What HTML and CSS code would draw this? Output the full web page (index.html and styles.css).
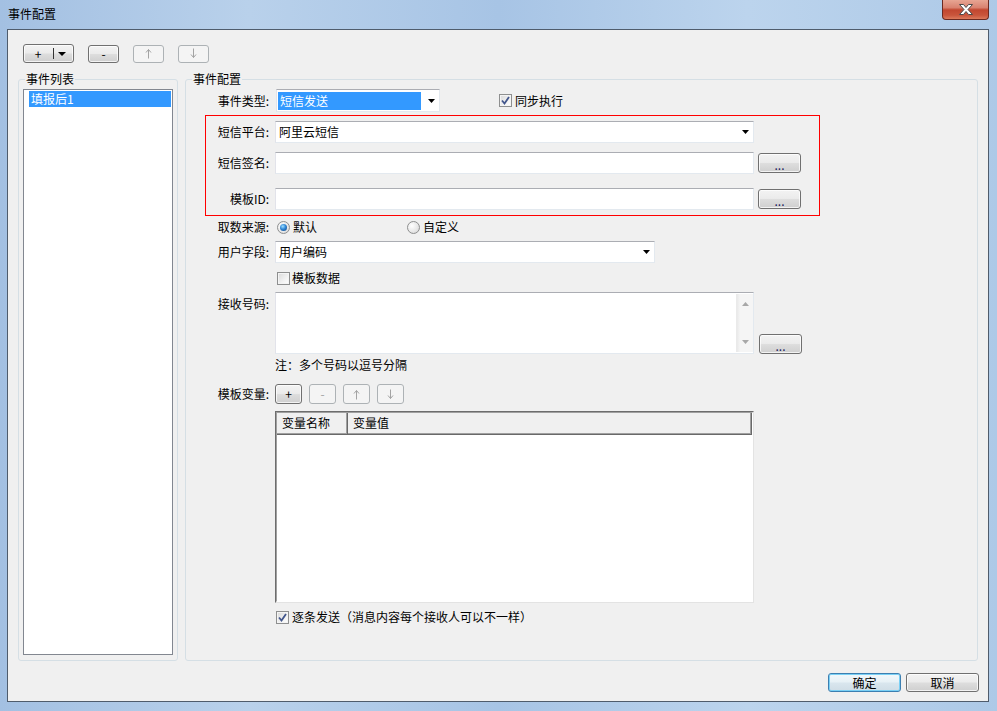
FILE: index.html
```html
<!DOCTYPE html>
<html lang="zh-CN">
<head>
<meta charset="utf-8">
<title>事件配置</title>
<link rel="stylesheet" href="styles.css">
</head>
<body>
<div class="window">
  <div class="titlebar">
    <span class="title">事件配置</span>
    <button class="close" aria-label="关闭">
      <svg width="14" height="11" viewBox="0 0 14 11"><polygon points="0.5,0.5 4.5,0.5 7,3.5 9.5,0.5 13.5,0.5 9,5.5 13.5,10.5 9.5,10.5 7,7.5 4.5,10.5 0.5,10.5 5,5.5" fill="#fff" stroke="#4a4a4a" stroke-width="1"/></svg>
    </button>
  </div>
  <div class="client">
    <div class="toolbar">
      <button class="btn btn-split"><span class="plus">+</span><span class="split-sep"></span><svg width="8" height="4" viewBox="0 0 8 4"><polygon points="0,0 8,0 4,4" fill="#000"/></svg></button>
      <button class="btn btn-tool">-</button>
      <button class="btn btn-tool disabled"><svg width="7" height="11" viewBox="0 0 7 11"><path d="M3.5 1.5V10.5M1 4.5L3.5 1.5L6 4.5" fill="none" stroke="#a3a3a3" stroke-width="1"/></svg></button>
      <button class="btn btn-tool disabled"><svg width="7" height="11" viewBox="0 0 7 11"><path d="M3.5 0.5V9.5M1 6.5L3.5 9.5L6 6.5" fill="none" stroke="#a3a3a3" stroke-width="1"/></svg></button>
    </div>
    <div class="groups">
      <fieldset class="group group-list">
        <legend>事件列表</legend>
        <div class="listbox">
          <div class="list-item selected">填报后1</div>
        </div>
      </fieldset>
      <fieldset class="group group-config">
        <legend>事件配置</legend>
        <div class="cfg">
          <div class="row r-type">
            <span class="lbl">事件类型:</span>
            <div class="combo w-type"><span class="sel">短信发送</span><svg class="drop" width="7" height="4" viewBox="0 0 7 4"><polygon points="0,0 7,0 3.5,4" fill="#000"/></svg></div>
            <label class="check chk-sync"><span class="cbox checked"><svg width="9" height="9" viewBox="0 0 9 9"><path d="M1 4.5L3.5 7.5L8 1" fill="none" stroke="#42568c" stroke-width="1.8"/></svg></span>同步执行</label>
          </div>
          <div class="redbox">
            <div class="row r-plat">
              <span class="lbl">短信平台:</span>
              <div class="combo w-wide"><span class="val">阿里云短信</span><svg class="drop" width="7" height="4" viewBox="0 0 7 4"><polygon points="0,0 7,0 3.5,4" fill="#000"/></svg></div>
            </div>
            <div class="row r-sign">
              <span class="lbl">短信签名:</span>
              <div class="input w-wide"></div>
              <button class="btn btn-dots">...</button>
            </div>
            <div class="row r-tpl">
              <span class="lbl">模板ID:</span>
              <div class="input w-wide"></div>
              <button class="btn btn-dots">...</button>
            </div>
          </div>
          <div class="row r-src">
            <span class="lbl">取数来源:</span>
            <label class="radio radio-first"><span class="rdot on"></span>默认</label>
            <label class="radio"><span class="rdot"></span>自定义</label>
          </div>
          <div class="row r-user">
            <span class="lbl">用户字段:</span>
            <div class="combo w-user"><span class="val">用户编码</span><svg class="drop" width="7" height="4" viewBox="0 0 7 4"><polygon points="0,0 7,0 3.5,4" fill="#000"/></svg></div>
          </div>
          <div class="row r-tdata">
            <span class="lbl"></span>
            <label class="check chk-data"><span class="cbox"></span>模板数据</label>
          </div>
          <div class="row r-recv">
            <span class="lbl lbl-top">接收号码:</span>
            <div class="textarea w-wide">
              <div class="vscroll">
                <svg width="7" height="4" viewBox="0 0 7 4"><polygon points="3.5,0 7,4 0,4" fill="#a8a8a8"/></svg>
                <svg width="7" height="4" viewBox="0 0 7 4"><polygon points="0,0 7,0 3.5,4" fill="#a8a8a8"/></svg>
              </div>
            </div>
            <button class="btn btn-dots btn-recv">...</button>
          </div>
          <div class="row r-note">
            <span class="lbl"></span>
            <span class="note">注：多个号码以逗号分隔</span>
          </div>
          <div class="row r-vars">
            <span class="lbl">模板变量:</span>
            <div class="mini-tools">
              <button class="btn btn-mini">+</button>
              <button class="btn btn-mini disabled">-</button>
              <button class="btn btn-mini disabled"><svg width="7" height="11" viewBox="0 0 7 11"><path d="M3.5 1.5V10.5M1 4.5L3.5 1.5L6 4.5" fill="none" stroke="#a3a3a3" stroke-width="1"/></svg></button>
              <button class="btn btn-mini disabled"><svg width="7" height="11" viewBox="0 0 7 11"><path d="M3.5 0.5V9.5M1 6.5L3.5 9.5L6 6.5" fill="none" stroke="#a3a3a3" stroke-width="1"/></svg></button>
            </div>
          </div>
          <div class="row r-grid">
            <span class="lbl"></span>
            <div class="grid w-wide">
              <div class="grid-inner">
                <div class="grid-head">
                  <div class="hcell hcell-name">变量名称</div>
                  <div class="hcell hcell-value">变量值</div>
                </div>
              </div>
            </div>
          </div>
          <div class="row r-each">
            <span class="lbl"></span>
            <label class="check chk-each"><span class="cbox checked"><svg width="9" height="9" viewBox="0 0 9 9"><path d="M1 4.5L3.5 7.5L8 1" fill="none" stroke="#42568c" stroke-width="1.8"/></svg></span>逐条发送（消息内容每个接收人可以不一样）</label>
          </div>
        </div>
      </fieldset>
    </div>
    <div class="footer">
      <button class="btn btn-foot btn-default">确定</button>
      <button class="btn btn-foot">取消</button>
    </div>
  </div>
  <div class="bottom-frame"></div>
</div>
</body>
</html>
```

FILE: styles.css
```css
* { box-sizing: border-box; }
html, body { margin: 0; padding: 0; }
body {
  width: 997px;
  height: 711px;
  overflow: hidden;
  font: 12px/16px "Noto Sans CJK SC", "Liberation Sans", sans-serif;
  color: #000;
  background: #b3cde9;
}
.window {
  display: flex;
  flex-direction: column;
  height: 711px;
  background: linear-gradient(90deg, #a3c0e2 0%, #b9d1eb 25%, #a7c4e5 50%, #bcd4ed 75%, #adc9e7 100%);
}
.titlebar {
  height: 29px;
  flex: none;
  display: flex;
  justify-content: space-between;
  align-items: flex-start;
  padding: 0 8px 0 8px;
}
.title { margin-top: 6px; line-height: 16px; }
.close {
  width: 47px;
  height: 20px;
  padding: 0;
  border: 1px solid #6b2a22;
  border-top: none;
  border-radius: 0 0 4px 4px;
  background: linear-gradient(180deg, #e7a593 0%, #d98270 40%, #c24730 52%, #c9553c 80%, #dc7a5c 100%);
  display: flex;
  align-items: center;
  justify-content: center;
}
.client {
  margin: 0 8px 0 7px;
  height: 673px;
  flex: none;
  border: 1px solid #4f5c6c;
  background: #f0f0f0;
  display: flex;
  flex-direction: column;
}
.bottom-frame { flex: 1; }

/* buttons */
.btn {
  font: inherit;
  color: #000;
  padding: 0;
  margin: 0;
  border: 1px solid #707070;
  border-radius: 3px;
  background: linear-gradient(180deg, #f3f3f3 0%, #ebebeb 47%, #dddddd 53%, #cfcfcf 100%);
  box-shadow: inset 0 0 0 1px rgba(255, 255, 255, 0.75);
  display: flex;
  align-items: center;
  justify-content: center;
  line-height: 16px;
  flex: none;
}
.btn.disabled {
  border-color: #adb2b5;
  background: #f4f4f4;
  color: #a3a3a3;
  box-shadow: none;
}

.toolbar {
  flex: none;
  height: 33px;
  padding: 14px 0 0 15px;
  display: flex;
  align-items: center;
  gap: 14px;
}
.btn-split { width: 51px; height: 19px; justify-content: flex-start; padding-left: 7px; }
.btn-split .plus { width: 14px; text-align: center; }
.btn-split .split-sep { width: 1px; height: 11px; background: #333; margin: 0 4px 0 8px; }
.btn-tool { width: 31px; height: 18px; }

.groups {
  flex: none;
  height: 590px;
  margin-top: 8px;
  padding: 0 10px;
  display: flex;
  gap: 7px;
}
.group {
  margin: 0;
  padding: 0;
  min-width: 0;
  border: 1px solid #d5dfe5;
  border-radius: 3px;
}
.group > legend { padding: 0 1px; line-height: 16px; }
.group-list { width: 160px; padding: 2px 4px 5px 4px; }
.group-list > legend { margin-left: 2px; }
.group-config { width: 793px; }
.group-config > legend { margin-left: 6px; }

.listbox {
  height: 566px;
  border: 1px solid #828790;
  background: #fff;
  padding: 1px 1px 0 5px;
}
.list-item { height: 16px; line-height: 16px; padding-left: 2px; }
.list-item.selected { background: #3399ff; color: #fff; }

/* config area */
.cfg { display: flex; flex-direction: column; }
.row { display: flex; align-items: center; flex: none; }
.lbl { width: 89px; padding-right: 6px; text-align: right; flex: none; white-space: nowrap; }
.r-type .lbl { width: 90px; padding-right: 7px; }
.redbox .lbl { width: 69px; }
.lbl-top { align-self: flex-start; margin-top: 4px; }

.r-type { margin-top: 2px; height: 23px; }
.redbox {
  margin: 3px 0 0 19px;
  width: 615px;
  height: 101px;
  border-width: 1px;
  border-style: solid;
  border-color: #ff0000;
  padding-top: 5px;
  display: flex;
  flex-direction: column;
}
.r-plat { height: 22px; }
.r-sign { margin-top: 9px; height: 22px; }
.r-tpl { margin-top: 14px; height: 22px; }
.r-src { margin-top: 3px; height: 16px; }
.r-user { margin-top: 6px; height: 22px; }
.r-tdata { margin-top: 7px; height: 16px; }
.r-recv { margin-top: 6px; height: 62px; align-items: stretch; }
.r-note { margin-top: 3px; height: 16px; }
.r-vars { margin-top: 11px; height: 20px; }
.r-grid { margin-top: 7px; height: 192px; align-items: stretch; }
.r-each { margin-top: 6px; height: 16px; }

.w-type { width: 164px; }
.w-wide { width: 479px; }
.w-user { width: 380px; }

.combo, .input, .textarea {
  height: 100%;
  background: #fff;
  border: 1px solid;
  border-color: #abadb3 #e3e9ef #e3e9ef #e2e3ea;
  flex: none;
}
.combo { display: flex; align-items: center; padding-left: 3px; }
.combo .drop { margin-left: auto; margin-right: 4px; flex: none; }
.r-type .combo { padding-left: 1px; }
.combo .sel {
  width: 143px;
  height: 18px;
  line-height: 18px;
  background: #3399ff;
  color: #fff;
  padding-left: 2px;
}
.val { line-height: 16px; }

.check { display: flex; align-items: center; white-space: nowrap; }
.chk-sync { margin-left: 59px; gap: 3px; }
.chk-data { margin-left: 2px; gap: 2px; }
.chk-each { margin-left: 1px; gap: 3px; }
.cbox {
  width: 13px;
  height: 13px;
  flex: none;
  border: 1px solid #8e8f8f;
  background: linear-gradient(135deg, #d9d9d9 0%, #f2f2f2 60%, #ffffff 100%);
  box-shadow: inset 0 0 0 1px #f4f4f4;
  display: flex;
  align-items: center;
  justify-content: center;
}

.radio { display: flex; align-items: center; gap: 3px; white-space: nowrap; }
.radio-first { width: 130px; margin-left: 2px; }
.rdot {
  width: 13px;
  height: 13px;
  flex: none;
  border-radius: 50%;
  border: 1px solid #8e8f8f;
  background: radial-gradient(circle at 35% 35%, #ffffff 0%, #e6e6e6 60%, #cfcfcf 100%);
  display: flex;
  align-items: center;
  justify-content: center;
}
.rdot.on::after {
  content: "";
  width: 7px;
  height: 7px;
  border-radius: 50%;
  background: radial-gradient(circle at 40% 35%, #9fe0ff 0%, #2f86d6 45%, #0f3f78 100%);
}

.btn-dots { width: 43px; height: 20px; margin-left: 4px; line-height: 16px; padding-top: 3px; color: #1a1a5a; }
.btn-recv { align-self: flex-end; margin-left: 5px; }

.textarea { display: flex; justify-content: flex-end; padding: 1px 0 1px 0; }
.vscroll {
  width: 17px;
  height: 100%;
  background: linear-gradient(90deg, #e9e9e9 0%, #f5f5f5 20%, #f5f5f5 100%);
  border-left: 1px solid #eaeaea;
  display: flex;
  flex-direction: column;
  justify-content: space-between;
  align-items: center;
  padding: 8px 0 8px 0;
}

.mini-tools { display: flex; gap: 7px; }
.btn-mini { width: 27px; height: 20px; }

.grid {
  height: 100%;
  border: 1px solid;
  border-color: #6d6d6d #e3e3e3 #e3e3e3 #6d6d6d;
  flex: none;
}
.grid-inner {
  height: 100%;
  border: 1px solid;
  border-color: #a0a0a0 #ffffff #ffffff #a0a0a0;
  background: #fff;
}
.grid-head { display: flex; height: 22px; }
.hcell {
  height: 22px;
  line-height: 20px;
  padding-left: 5px;
  background: #f0f0f0;
  border-right: 1px solid #696969;
  border-bottom: 1px solid #696969;
  box-shadow: inset -1px -1px 0 #a0a0a0;
}
.hcell-name { width: 71px; }
.hcell-value { flex: 1; }

.footer {
  flex: none;
  height: 19px;
  margin-top: 12px;
  padding-right: 9px;
  display: flex;
  justify-content: flex-end;
  gap: 5px;
}
.btn-foot { width: 73px; height: 19px; }
.btn-default {
  border-color: #3c7fb1;
  box-shadow: inset 0 0 0 1px #7ad0f5;
  background: linear-gradient(180deg, #f2f8fb 0%, #e7f1f6 47%, #d9e6ee 53%, #cfdde6 100%);
}
```
